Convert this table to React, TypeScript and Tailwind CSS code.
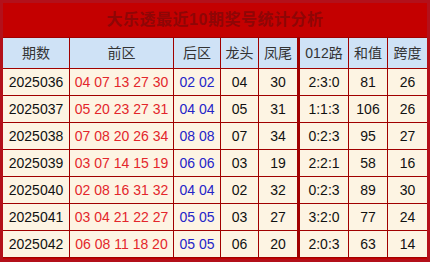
import React from "react";

const rows = [
  ["2025036", "04 07 13 27 30", "02 02", "04", "30", "2:3:0", "81", "26"],
  ["2025037", "05 20 23 27 31", "04 04", "05", "31", "1:1:3", "106", "26"],
  ["2025038", "07 08 20 26 34", "08 08", "07", "34", "0:2:3", "95", "27"],
  ["2025039", "03 07 14 15 19", "06 06", "03", "19", "2:2:1", "58", "16"],
  ["2025040", "02 08 16 31 32", "04 04", "02", "32", "0:2:3", "89", "30"],
  ["2025041", "03 04 21 22 27", "05 05", "03", "27", "3:2:0", "77", "24"],
  ["2025042", "06 08 11 18 20", "05 05", "06", "20", "2:0:3", "63", "14"],
];

const widths = [
  "w-[67px] border-r",
  "w-[104px] border-r",
  "w-[47px] border-r",
  "w-[38px] border-r",
  "w-[41px] border-r-[3px]",
  "w-[49px] border-r",
  "w-[39px] border-r",
  "w-[39px]",
];

const headers = ["期数", "前区", "后区", "龙头", "凤尾", "012路", "和值", "跨度"];

export default function App() {
  return (
    <div
      className="w-[430px] h-[262px] border-[3px] border-[#b3101a] bg-[#c40000] flex flex-col"
      style={{ fontFamily: '"Liberation Sans", "Noto Sans CJK SC", sans-serif' }}
    >
      <div className="h-[34px] flex items-center justify-center text-[16px] text-[#8e0606] font-bold tracking-[0.5px]">
        大乐透最近10期奖号统计分析
      </div>
      <div className="flex h-[32px] border-y border-[#a00000] bg-[#cfe2f6] text-[14px] text-[#333]">
        {headers.map((h, i) => (
          <div key={h} className={`${widths[i]} border-[#a00000] flex items-center justify-center`}>
            {h}
          </div>
        ))}
      </div>
      {rows.map((r) => (
        <div key={r[0]} className="flex h-[27px] border-b border-[#a00000] bg-[#fdf4e3] text-[14px] text-[#111]">
          {r.map((c, i) => (
            <div
              key={i}
              className={`${widths[i]} border-[#a00000] flex items-center justify-center ${
                i === 1 ? "text-[#e3262b]" : i === 2 ? "text-[#2424c8]" : ""
              }`}
            >
              {c}
            </div>
          ))}
        </div>
      ))}
    </div>
  );
}
